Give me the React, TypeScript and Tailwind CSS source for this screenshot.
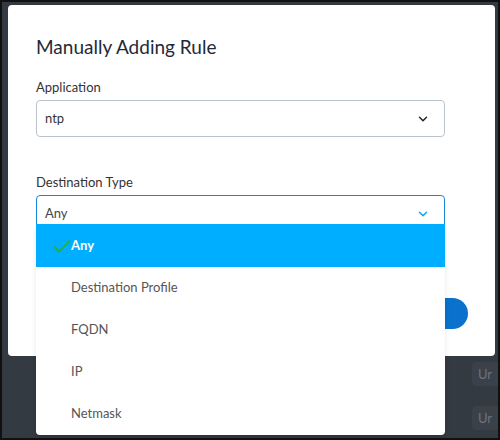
import { ChevronDown } from "lucide-react";

const OPTIONS = ["Any", "Destination Profile", "FQDN", "IP", "Netmask"];

export default function App() {
  return (
    <div
      className="relative w-[500px] h-[440px] overflow-hidden bg-[#343a42] border-2 border-[#111]"
      style={{ fontFamily: "Lato, 'Open Sans', sans-serif" }}
    >
      {/* background table hints */}
      <div className="absolute left-[470px] top-[360px] flex flex-col gap-[20px]">
        <div className="h-[24px] w-[40px] rounded bg-[#3b4149] text-[13px] text-[#6b7280] px-[6px] leading-[24px]">Ur</div>
        <div className="h-[24px] w-[40px] rounded bg-[#3b4149] text-[13px] text-[#6b7280] px-[6px] leading-[24px]">Ur</div>
      </div>

      <div className="absolute left-[6px] top-[3px] w-[487px] h-[351px] rounded-[4px] bg-white px-[28px] pt-[29px]">
        <h2 className="text-[19px] text-[#1f2937] leading-[26px]">Manually Adding Rule</h2>

        <div className="mt-[19px] text-[13px] text-[#333] leading-[16px]">Application</div>
        <div className="mt-[5px] h-[37px] w-[409px] rounded-[4px] border border-[#b9c4cc] flex items-center justify-between pl-[8px] pr-[14px]">
          <span className="text-[13px] text-[#333]">ntp</span>
          <ChevronDown className="w-[14px] h-[14px] text-[#222]" strokeWidth={2.5} />
        </div>

        <div className="mt-[37px] text-[13px] text-[#333] leading-[16px]">Destination Type</div>
        <div className="mt-[5px] h-[37px] w-[409px] rounded-[4px] border border-[#1a8ad6] flex items-center justify-between pl-[8px] pr-[14px]">
          <span className="text-[13px] text-[#444]">Any</span>
          <ChevronDown className="w-[14px] h-[14px] text-[#0aa2ee]" strokeWidth={2.5} />
        </div>

        <div className="absolute left-[420px] top-[293px] w-[40px] h-[31px] rounded-full bg-[#0a72cc]" />
      </div>

      <div className="absolute left-[34px] top-[222px] w-[409px] rounded-b-[4px] bg-white shadow-md overflow-hidden">
        {OPTIONS.map((o, i) => (
          <div
            key={o}
            className={`h-[42px] flex items-center pl-[35px] text-[13px] ${
              i === 0 ? "bg-[#00aeff] text-white font-bold h-[43px]" : "text-[#555]"
            }`}
          >
            {i === 0 && (
              <svg className="absolute left-[17px] w-[18px] h-[14px]" viewBox="0 0 18 14">
                <path d="M1 7.5 L6 12.5 L17 1.5" fill="none" stroke="#22b04b" strokeWidth="2" />
              </svg>
            )}
            {o}
          </div>
        ))}
      </div>
    </div>
  );
}
